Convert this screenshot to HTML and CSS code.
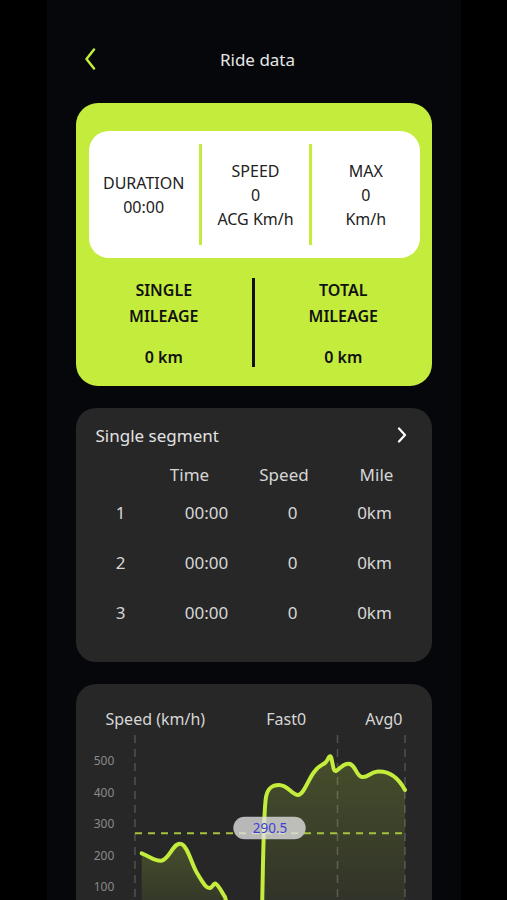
FILE: index.html
```html
<!DOCTYPE html>
<html lang="en">
<head>
    <meta charset="UTF-8">
    <meta name="viewport" content="width=device-width, initial-scale=1.0">
    <title>Ride data</title>
    <link rel="stylesheet" href="styles.css">
</head>
<body>
    <div class="app">
        <header class="topbar">
            <svg class="back" width="12" height="22" viewBox="0 0 12 22">
                <path d="M10 1.5 L2.5 11 L10 20.5" />
            </svg>
            <h1>Ride data</h1>
            <span></span>
        </header>

        <section class="summary">
            <div class="stats">
                <div class="stat">
                    <span>DURATION</span>
                    <span>00:00</span>
                </div>
                <div class="stat">
                    <span>SPEED</span>
                    <span>0</span>
                    <span>ACG Km/h</span>
                </div>
                <div class="stat">
                    <span>MAX</span>
                    <span>0</span>
                    <span>Km/h</span>
                </div>
            </div>
            <div class="mileage">
                <div class="mile-col">
                    <p class="mile-label">SINGLE<br>MILEAGE</p>
                    <p class="mile-value">0 km</p>
                </div>
                <div class="mile-divider"></div>
                <div class="mile-col">
                    <p class="mile-label">TOTAL<br>MILEAGE</p>
                    <p class="mile-value">0 km</p>
                </div>
            </div>
        </section>

        <section class="card segments">
            <div class="card-title">
                <span>Single segment</span>
                <svg class="more" width="10" height="16" viewBox="0 0 10 16">
                    <path d="M2 1.5 L8 8 L2 14.5" />
                </svg>
            </div>
            <div class="seg-head">
                <span></span>
                <span>Time</span>
                <span>Speed</span>
                <span>Mile</span>
            </div>
            <div class="seg-row">
                <span>1</span><span>00:00</span><span>0</span><span>0km</span>
            </div>
            <div class="seg-row">
                <span>2</span><span>00:00</span><span>0</span><span>0km</span>
            </div>
            <div class="seg-row">
                <span>3</span><span>00:00</span><span>0</span><span>0km</span>
            </div>
        </section>

        <section class="card chart-card">
            <div class="chart-head">
                <span class="chart-title">Speed (km/h)</span>
                <span class="fast">Fast0</span>
                <span>Avg0</span>
            </div>
            <svg class="chart" width="356" height="190" viewBox="0 0 356 190">
                <defs>
                    <linearGradient id="area" x1="0" y1="0" x2="0" y2="1">
                        <stop offset="0" stop-color="#c4ec3c" stop-opacity="0.2" />
                        <stop offset="1" stop-color="#c4ec3c" stop-opacity="0.04" />
                    </linearGradient>
                </defs>

                <g class="axis-labels">
                    <text x="28" y="30">500</text>
                    <text x="28" y="62">400</text>
                    <text x="28" y="93">300</text>
                    <text x="28" y="125">200</text>
                    <text x="28" y="156">100</text>
                </g>

                <g class="grid-lines">
                    <line x1="59" y1="0" x2="59" y2="190" />
                    <line x1="261.5" y1="0" x2="261.5" y2="190" />
                    <line x1="329" y1="0" x2="329" y2="190" />
                </g>

                <path class="area" d="M65.7,190 L65.7,118.3 C75,122 80,127 86,125.5 C94,123 98,106 105.5,109 C112,112 116,130 121,138 C126,146 130,154 134,153 C137,152 138,147 140,149 C144,152 146,158 149,162 L156,190 Z" />
                <path class="area" d="M186,190 C187,150 187,80 190,62 C192,52 197,50 203,50 C212,50 216,60 222,60 C228,60 233,42 239,36 C242,31 246,30 249,28 C252,26 253,19 255,22 C257,28 257,37 260,36 C264,34 268,27 274,29 C280,31 280,41 286,42 C292,43 294,37 302,36.5 C312,36 322,42 329,55 L329,190 Z" />

                <line class="avg-line" x1="59" y1="98.3" x2="329" y2="98.3" />

                <path class="curve" d="M65.7,118.3 C75,122 80,127 86,125.5 C94,123 98,106 105.5,109 C112,112 116,130 121,138 C126,146 130,154 134,153 C137,152 138,147 140,149 C144,152 146,158 149,162 L158,195" />
                <path class="curve" d="M185.5,195 C187,150 187,80 190,62 C192,52 197,50 203,50 C212,50 216,60 222,60 C228,60 233,42 239,36 C242,31 246,30 249,28 C252,26 253,19 255,22 C257,28 257,37 260,36 C264,34 268,27 274,29 C280,31 280,41 286,42 C292,43 294,37 302,36.5 C312,36 322,42 329,55" />

                <rect class="pill" x="157.3" y="81.7" width="72.4" height="22.6" rx="11.3" />
                <text class="pill-text" x="194" y="97.8">290.5</text>
            </svg>
        </section>
    </div>
</body>
</html>
```

FILE: styles.css
```css
body {
    margin: 0;
    background-color: #000;
    font-family: "Noto Sans", "Liberation Sans", sans-serif;
    overflow: hidden;
}
.app {
    width: 414px;
    min-height: 900px;
    margin: 0 auto;
    background-color: #05070a;
}
.topbar {
    display: grid;
    grid-template-columns: 1fr auto 1fr;
    align-items: center;
    height: 38px;
    padding-top: 40px;
}
.back {
    margin-left: 37px;
}
.back path {
    fill: none;
    stroke: #c4ec3c;
    stroke-width: 2.5;
    stroke-linecap: round;
    stroke-linejoin: round;
}
.topbar h1 {
    margin: 0;
    font-size: 17px;
    font-weight: normal;
    color: #e6e6e6;
    padding-left: 8px;
}

/* green summary */
.summary {
    margin: 25px 29px 0;
    height: 283px;
    background-color: #c4ec3c;
    border-radius: 22px;
    overflow: hidden;
}
.stats {
    display: grid;
    grid-template-columns: 1fr 1fr 1fr;
    margin: 28px 12px 0 13px;
    height: 101px;
    padding: 13px 0;
    background-color: #fff;
    border-radius: 20px;
}
.stat {
    display: flex;
    flex-direction: column;
    justify-content: center;
    text-align: center;
    font-size: 16px;
    line-height: 24px;
    color: #222;
}
.stat + .stat {
    border-left: 3px solid #c4ec3c;
}
.mileage {
    display: grid;
    grid-template-columns: 1fr 3px 1fr;
}
.mile-col {
    padding-top: 19px;
    text-align: center;
    color: #111;
    font-weight: 600;
    font-size: 16px;
}
.mile-label {
    margin: 0;
    line-height: 26px;
}
.mile-value {
    margin: 16px 0 0;
    line-height: 24px;
}
.mile-divider {
    margin-top: 20px;
    height: 89px;
    background-color: #111;
}

/* dark cards */
.card {
    margin: 22px 29px 0;
    background-color: #272727;
    border-radius: 20px;
}
.segments {
    height: 254px;
    box-sizing: border-box;
    padding: 15px 0 0 20px;
    color: #d6d6d6;
    font-size: 17px;
}
.card-title {
    display: flex;
    justify-content: space-between;
    align-items: center;
    height: 24px;
    padding-right: 25px;
    color: #e2e2e2;
}
.more path {
    fill: none;
    stroke: #fff;
    stroke-width: 2.2;
    stroke-linecap: round;
    stroke-linejoin: round;
}
.seg-head {
    display: grid;
    grid-template-columns: 50px 88px 101px 84px;
    margin-top: 16px;
    line-height: 24px;
    text-align: center;
}
.seg-row {
    display: grid;
    grid-template-columns: 50px 122px 50px 114px;
    height: 50px;
    align-items: center;
    text-align: center;
}

.chart-card {
    height: 260px;
    padding-top: 23px;
    overflow: hidden;
}
.chart-head {
    display: flex;
    padding: 0 29px 0 30px;
    line-height: 24px;
    font-size: 16px;
    color: #d6d6d6;
}
.chart-title {
    flex: 1;
}
.fast {
    margin-right: 59px;
}
.chart {
    display: block;
    margin-top: 4px;
}
.axis-labels text {
    font-family: "Noto Sans", sans-serif;
    font-size: 12px;
    fill: #8a8a8a;
    text-anchor: middle;
}
.grid-lines line {
    stroke: #525252;
    stroke-width: 1.5;
    stroke-dasharray: 8 6;
}
.area {
    fill: url(#area);
}
.avg-line {
    stroke: #a4c23c;
    stroke-width: 2;
    stroke-dasharray: 7 6;
}
.curve {
    fill: none;
    stroke: #c4ec3c;
    stroke-width: 4;
    stroke-linecap: round;
    stroke-linejoin: round;
}
.pill {
    fill: #e2e2e2;
    fill-opacity: 0.78;
}
.pill-text {
    font-family: "Noto Sans", sans-serif;
    font-size: 13.5px;
    fill: #3f3fd4;
    text-anchor: middle;
}
```
